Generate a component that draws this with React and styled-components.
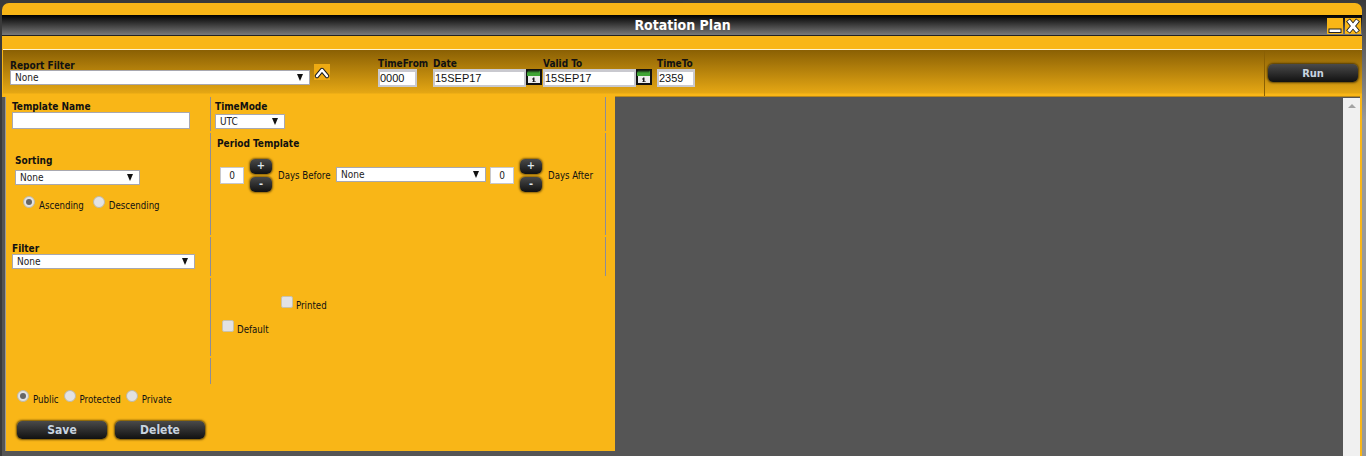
import React from 'react';
import styled, { createGlobalStyle } from 'styled-components';

const TAHOMA_LIKE = '"DejaVu Sans Condensed", "DejaVu Sans", "Liberation Sans", sans-serif';

const GlobalStyle = createGlobalStyle`
  html, body {
    margin: 0;
    padding: 0;
    height: 456px;
    overflow: hidden;
    background: linear-gradient(#3a3a3a, #999 120px) right / 50% 100% no-repeat, #3a3a3a;
    font-family: ${TAHOMA_LIKE};
  }
`;

const Window = styled.div`
  width: 1360px;
  height: 453px;
  margin: 3px 0 0 2px;
  background: #f9b617;
  border-radius: 7px 7px 0 0;
  padding-top: 12px;
  box-sizing: border-box;
  overflow: hidden;
`;

const TitleBar = styled.div`
  height: 20px;
  background: linear-gradient(#000, #7a7a7a);
  border-bottom: 1px solid #222;
  display: flex;
  align-items: center;
  justify-content: center;
  position: relative;
  color: #fff;
  font-size: 14px;
  font-weight: bold;
  padding-left: 1px;
`;

const WinButtons = styled.div`
  position: absolute;
  right: 1px;
  top: 3px;
  display: flex;
  gap: 2px;
`;

const WinButton = styled.div`
  width: 16px;
  height: 16px;
  background: #f9b617;
  display: flex;
  align-items: center;
  justify-content: center;
`;

const Gap = styled.div`
  height: 13px;
  margin-left: 1px;
  border-bottom: 1px solid #fff3d0;
`;

const Toolbar = styled.div`
  height: 47px;
  margin-left: 1px;
  background: linear-gradient(#8a6004, #e5a714 43px, #f9b617 44px);
  display: flex;
  box-sizing: border-box;
`;

const ToolMain = styled.div`
  flex: 1;
  display: flex;
  padding: 7px 0 0 7px;
`;

const RunCell = styled.div`
  width: 98px;
  border-left: 1px solid #8a6004;
  padding: 14px 0 0 3px;
  box-sizing: border-box;
`;

const Label = styled.div`
  font-size: 10px;
  font-weight: bold;
  color: #111;
  line-height: 12px;
  padding-top: 1px;
  margin: ${(p) => p.$top || 0}px 0 -1px ${(p) => p.$left || 0}px;
`;

const Field = styled.div`
  display: flex;
  flex-direction: column;
  margin-left: ${(p) => p.$left || 0}px;
  margin-top: ${(p) => p.$top || 0}px;
  width: ${(p) => (p.$width ? `${p.$width}px` : 'auto')};
`;

const SelectBox = styled.div`
  width: ${(p) => p.$width}px;
  height: 15px;
  flex: none;
  margin: ${(p) => p.$margin || 0};
  background: #fff;
  border: 1px solid #a8a8b0;
  display: flex;
  align-items: center;
  justify-content: space-between;
  padding: 0 4px;
  box-sizing: border-box;
  font-size: 10px;
  color: #222;
`;

const Arrow = styled.span`
  width: 0;
  height: 0;
  border-left: 3px solid transparent;
  border-right: 3px solid transparent;
  border-top: 7px solid #111;
  margin-right: 2px;
`;

const CollapseBtn = styled.div`
  width: 16px;
  height: 16px;
  margin: 7px 0 0 4px;
  background: #eeaa12;
`;

const DateInput = styled.div`
  width: ${(p) => p.$width}px;
  height: 18px;
  box-sizing: border-box;
  background: #fff;
  border: 2px solid #c9c9cf;
  border-top-width: 3px;
  font-family: "Liberation Sans", Arial, sans-serif;
  font-size: 11px;
  line-height: 13px;
  color: #111;
`;

const CalIcon = styled.div`
  width: 16px;
  height: 16px;
  flex: none;
`;

const DateRow = styled.div`
  display: flex;
  align-items: flex-start;
`;

const DarkButton = styled.div`
  width: 90px;
  height: 18px;
  border-radius: 5px;
  background: linear-gradient(#4a4a4a, #111);
  box-shadow: 0 0 2px 1px rgba(50, 35, 0, 0.7);
  color: #c8d4e0;
  font-size: ${(p) => p.$size || 11}px;
  font-weight: bold;
  display: flex;
  align-items: center;
  justify-content: center;
`;

const Body = styled.div`
  display: flex;
  height: 360px;
  margin-right: 2px;
  background: #555;
  border-left: 3px solid #555;
`;

const LeftPanel = styled.div`
  width: 610px;
  height: 354px;
  background: #f9b617;
  box-shadow: inset 1px 0 #999;
  display: flex;
  flex-direction: column;
  flex: none;
`;

const Row = styled.div`
  display: grid;
  grid-template-columns: 206px 394px 1px;
  height: ${(p) => p.$height}px;
`;

const LeftCell = styled.div`
  padding: ${(p) => p.$pad || '0 0 0 7px'};
  border-right: 1px solid #8c8c98;
  margin-bottom: 2px;
`;

const MidCell = styled.div`
  position: relative;
  padding-left: 4px;
`;

const EndRule = styled.div`
  background: ${(p) => (p.$hidden ? 'transparent' : '#8c8c98')};
  margin-bottom: 2px;
`;

const TextBox = styled.div`
  width: ${(p) => p.$width}px;
  height: 17px;
  box-sizing: border-box;
  background: #fff;
  border: 1px solid #a8a8b0;
`;

const Small = styled.span`
  font-size: 9.6px;
  color: #111;
  flex: none;
  white-space: nowrap;
  width: ${(p) => (p.$width ? `${p.$width}px` : 'auto')};
`;

const RadioDot = styled.span`
  width: 12px;
  height: 12px;
  border-radius: 50%;
  background: #e2e2e4;
  border: 1px solid #bfb9a5;
  box-sizing: border-box;
  display: inline-flex;
  align-items: center;
  justify-content: center;
  margin-top: -8px;
  margin-right: 4px;
  &::after {
    content: '';
    display: ${(p) => (p.$on ? 'block' : 'none')};
    width: 6px;
    height: 6px;
    border-radius: 50%;
    background: #666;
  }
`;

const RadioRow = styled.div`
  display: flex;
  align-items: center;
  margin: ${(p) => p.$margin};
  gap: ${(p) => p.$gap || 3}px;
`;

const Radio = styled.label`
  display: flex;
  align-items: center;
`;

const PeriodRow = styled.div`
  display: flex;
  align-items: center;
  margin-top: 10px;
  padding-left: 5px;
`;

const NumBox = styled.div`
  width: 24px;
  height: 17px;
  box-sizing: border-box;
  background: #fff;
  border: 1px solid #c8c8cc;
  font-size: 10px;
  color: #222;
  text-align: center;
  line-height: 15px;
`;

const Stepper = styled.div`
  display: flex;
  flex-direction: column;
  gap: 3px;
  margin: 0 6px;
`;

const StepButton = styled.div`
  width: 22px;
  height: 15px;
  border-radius: 5px;
  background: linear-gradient(#4a4a4a, #111);
  box-shadow: 0 0 2px 1px rgba(60, 40, 0, 0.6);
  color: #dfe6ee;
  font-size: 11px;
  font-weight: bold;
  line-height: 14px;
  text-align: center;
`;

const Check = styled.span`
  width: 12px;
  height: 12px;
  box-sizing: border-box;
  background: #e2e2e4;
  border: 1px solid #c9c2aa;
  border-radius: 2px;
  margin-right: 3px;
  margin-top: -8px;
`;

const CheckLabel = styled.label`
  position: absolute;
  left: ${(p) => p.$left}px;
  top: ${(p) => p.$top}px;
  display: flex;
  align-items: center;
`;

const Footer = styled.div`
  display: flex;
  gap: 8px;
  margin: 16px 0 0 12px;
`;

const Viewer = styled.div`
  flex: 1;
  position: relative;
  margin-top: -1px;
  border-top: 1px solid #b8871a;
  display: flex;
  justify-content: flex-end;
`;

const Scrollbar = styled.div`
  width: 17px;
  margin-top: 1px;
  background: #f0f0f0;
  display: flex;
  justify-content: center;
  padding-top: 6px;
  box-sizing: border-box;
`;

const ScrollUp = styled.span`
  width: 0;
  height: 0;
  border-left: 4px solid transparent;
  border-right: 4px solid transparent;
  border-bottom: 4px solid #a3a3a3;
`;

const Calendar = () => (
  <CalIcon>
    <svg width="16" height="16" viewBox="0 0 16 16">
      <rect width="16" height="16" fill="#111" />
      <path d="M1 7V2l1 2 1-3 1 3 1-3 1 3 1-3 1 3 1-3 1 3 1-3 1 3 1-3 1 2v5z" fill="#3fa535" />
      <rect x="2" y="7" width="12" height="7" fill="#eee" />
      <path d="M7 8.5h1.5V13H7zM6 9.5h1v1H6zM6 12.500h4v.5H6z" fill="#222" />
    </svg>
  </CalIcon>
);

const App = () => (
  <>
    <GlobalStyle />
    <Window>
      <TitleBar>
        Rotation Plan
        <WinButtons>
          <WinButton>
            <svg width="16" height="16" viewBox="0 0 16 16">
              <rect x="2" y="11" width="12" height="3.500" fill="#fff" stroke="#222" strokeWidth="1" />
            </svg>
          </WinButton>
          <WinButton>
            <svg width="16" height="16" viewBox="0 0 16 16">
              <path d="M3 2 L13 14 M13 2 L3 14" stroke="#222" strokeWidth="5" />
              <path d="M3.500 2.500 L12.500 13.500 M12.500 2.500 L3.500 13.500" stroke="#fff" strokeWidth="3.200" />
            </svg>
          </WinButton>
        </WinButtons>
      </TitleBar>
      <Gap />
      <Toolbar>
        <ToolMain>
          <Field $top={2}>
            <Label>Report Filter</Label>
            <SelectBox $width={300} $margin="-1px 0 0">None<Arrow /></SelectBox>
          </Field>
          <CollapseBtn>
            <svg width="16" height="16" viewBox="0 0 16 16">
              <path d="M3 12 L8 6 L13 12" fill="none" stroke="#222" strokeWidth="4.400" strokeLinejoin="round" strokeLinecap="round" />
              <path d="M3 12 L8 6 L13 12" fill="none" stroke="#fff" strokeWidth="2.400" strokeLinejoin="round" strokeLinecap="round" />
            </svg>
          </CollapseBtn>
          <Field $left={48} $width={55}>
            <Label>TimeFrom</Label>
            <DateInput $width={39}>0000</DateInput>
          </Field>
          <Field $width={110}>
            <Label>Date</Label>
            <DateRow>
              <DateInput $width={93}>15SEP17</DateInput>
              <Calendar />
            </DateRow>
          </Field>
          <Field $width={114}>
            <Label>Valid To</Label>
            <DateRow>
              <DateInput $width={93}>15SEP17</DateInput>
              <Calendar />
            </DateRow>
          </Field>
          <Field>
            <Label>TimeTo</Label>
            <DateInput $width={38}>2359</DateInput>
          </Field>
        </ToolMain>
        <RunCell>
          <DarkButton>Run</DarkButton>
        </RunCell>
      </Toolbar>
      <Body>
        <LeftPanel>
          <Row $height={36}>
            <LeftCell>
              <Label $top={3}>Template Name</Label>
              <TextBox $width={178} />
            </LeftCell>
            <MidCell>
              <Label $top={3}>TimeMode</Label>
              <SelectBox $width={70} $margin="2px 0 0">UTC<Arrow /></SelectBox>
            </MidCell>
            <EndRule />
          </Row>
          <Row $height={104}>
            <LeftCell $pad="21px 0 0 10px">
              <Label>Sorting</Label>
              <SelectBox $width={125} $margin="4px 0 0">None<Arrow /></SelectBox>
              <RadioRow $margin="15px 0 0 8px" $gap={9}>
                <Radio><RadioDot $on /><Small>Ascending</Small></Radio>
                <Radio><RadioDot /><Small>Descending</Small></Radio>
              </RadioRow>
            </LeftCell>
            <MidCell>
              <Label $top={4} $left={2}>Period Template</Label>
              <PeriodRow>
                <NumBox>0</NumBox>
                <Stepper>
                  <StepButton>+</StepButton>
                  <StepButton>-</StepButton>
                </Stepper>
                <Small $width={53}>Days Before</Small>
                <SelectBox $width={150} $margin="-2px 4px 0 5px">None<Arrow /></SelectBox>
                <NumBox>0</NumBox>
                <Stepper>
                  <StepButton>+</StepButton>
                  <StepButton>-</StepButton>
                </Stepper>
                <Small>Days After</Small>
              </PeriodRow>
            </MidCell>
            <EndRule />
          </Row>
          <Row $height={41}>
            <LeftCell>
              <Label $top={5}>Filter</Label>
              <SelectBox $width={183}>None<Arrow /></SelectBox>
            </LeftCell>
            <MidCell />
            <EndRule />
          </Row>
          <Row $height={80}>
            <LeftCell />
            <MidCell>
              <CheckLabel $left={70} $top={22}><Check /><Small>Printed</Small></CheckLabel>
              <CheckLabel $left={11} $top={46}><Check /><Small>Default</Small></CheckLabel>
            </MidCell>
            <EndRule $hidden />
          </Row>
          <Row $height={28}>
            <LeftCell />
            <MidCell />
            <EndRule $hidden />
          </Row>
          <RadioRow $margin="8px 0 0 12px" $gap={5}>
            <Radio><RadioDot $on /><Small>Public</Small></Radio>
            <Radio><RadioDot /><Small>Protected</Small></Radio>
            <Radio><RadioDot /><Small>Private</Small></Radio>
          </RadioRow>
          <Footer>
            <DarkButton $size={12}>Save</DarkButton>
            <DarkButton $size={12}>Delete</DarkButton>
          </Footer>
        </LeftPanel>
        <Viewer>
          <Scrollbar><ScrollUp /></Scrollbar>
        </Viewer>
      </Body>
    </Window>
  </>
);

export default App;
